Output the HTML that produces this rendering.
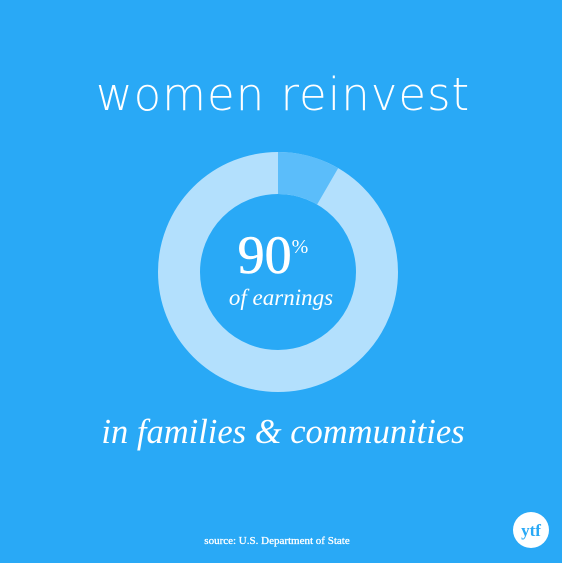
<!DOCTYPE html>
<html><head><style>
html,body{margin:0;padding:0}
body{width:562px;height:563px;background:#29a9f6;position:relative;overflow:hidden;color:#fff}
.t{position:absolute;left:0;width:562px;text-align:center;white-space:nowrap}
</style></head><body>
<div class="t" style="top:68px;left:2px;font:200 45px 'DejaVu Sans','Liberation Sans',sans-serif;letter-spacing:1px;">women reinvest</div>
<svg style="position:absolute;left:0;top:0" width="562" height="563">
<circle cx="278" cy="272" r="99" fill="none" stroke="#b3e0fd" stroke-width="42"/>
<circle cx="278" cy="272" r="99" fill="none" stroke="#5bbdfa" stroke-width="42" stroke-dasharray="52 600" transform="rotate(-90 278 272)"/>
<circle cx="531" cy="530" r="18" fill="#fff"/>
<text x="531" y="536" text-anchor="middle" font-family="Liberation Serif,serif" font-weight="bold" font-size="17" fill="#29a9f6">ytf</text>
</svg>
<div class="t" style="top:224px;left:-8px;font:54px 'Liberation Serif',serif;-webkit-text-stroke:0.6px #fff">90<span style="font-size:20px;vertical-align:20px;-webkit-text-stroke:0">%</span></div>
<div class="t" style="top:285px;font:italic 23px 'Liberation Serif',serif">of earnings</div>
<div class="t" style="top:413px;left:2px;font:italic 34.5px 'Liberation Serif',serif">in families &amp; communities</div>
<div class="t" style="top:535px;left:-4px;font:11px 'Liberation Serif',serif;-webkit-text-stroke:0.3px #fff">source: U.S. Department of State</div>
</body></html>
